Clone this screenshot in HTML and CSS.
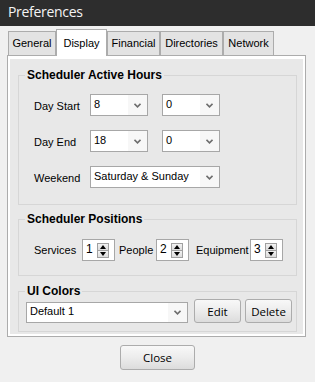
FILE: index.html
```html
<!DOCTYPE html>
<html lang="en">

<head>
  <meta charset="UTF-8">
  <meta name="viewport" content="width=device-width, initial-scale=1.0">
  <link rel="stylesheet" href="styles.css">
</head>

<body>
  <main class="window">
    <header class="titlebar">Preferences</header>

    <nav class="tabs">
      <div class="tab tab--general">General</div>
      <div class="tab tab--display tab--active">Display</div>
      <div class="tab tab--financial">Financial</div>
      <div class="tab tab--directories">Directories</div>
      <div class="tab tab--network">Network</div>
    </nav>

    <section class="panel">
      <div class="panel__inner">
        <fieldset class="group group--hours">
          <legend class="group__title">Scheduler Active Hours</legend>
          <div class="group__body">
            <div class="field-row">
              <span class="label label--hours">Day Start</span>
              <div class="combo combo--short">
                <span class="combo__text">8</span>
                <span class="combo__arrow"><svg width="7" height="5" viewBox="0 0 7 5"><polyline points="0.5,0.8 3.5,3.8 6.5,0.8" /></svg></span>
              </div>
              <div class="combo combo--short">
                <span class="combo__text">0</span>
                <span class="combo__arrow"><svg width="7" height="5" viewBox="0 0 7 5"><polyline points="0.5,0.8 3.5,3.8 6.5,0.8" /></svg></span>
              </div>
            </div>
            <div class="field-row">
              <span class="label label--hours">Day End</span>
              <div class="combo combo--short">
                <span class="combo__text">18</span>
                <span class="combo__arrow"><svg width="7" height="5" viewBox="0 0 7 5"><polyline points="0.5,0.8 3.5,3.8 6.5,0.8" /></svg></span>
              </div>
              <div class="combo combo--short">
                <span class="combo__text">0</span>
                <span class="combo__arrow"><svg width="7" height="5" viewBox="0 0 7 5"><polyline points="0.5,0.8 3.5,3.8 6.5,0.8" /></svg></span>
              </div>
            </div>
            <div class="field-row">
              <span class="label label--hours">Weekend</span>
              <div class="combo combo--wide">
                <span class="combo__text">Saturday &amp; Sunday</span>
                <span class="combo__arrow"><svg width="7" height="5" viewBox="0 0 7 5"><polyline points="0.5,0.8 3.5,3.8 6.5,0.8" /></svg></span>
              </div>
            </div>
          </div>
        </fieldset>

        <fieldset class="group group--positions">
          <legend class="group__title">Scheduler Positions</legend>
          <div class="group__body">
            <div class="spin-row">
              <span class="label label--services">Services</span>
              <div class="spin">
                <span class="spin__value">1</span>
                <span class="spin__buttons">
                  <span class="spin__btn spin__btn--up"></span>
                  <span class="spin__btn spin__btn--down"></span>
                </span>
              </div>
              <span class="label label--people">People</span>
              <div class="spin">
                <span class="spin__value">2</span>
                <span class="spin__buttons">
                  <span class="spin__btn spin__btn--up"></span>
                  <span class="spin__btn spin__btn--down"></span>
                </span>
              </div>
              <span class="label label--equipment">Equipment</span>
              <div class="spin">
                <span class="spin__value">3</span>
                <span class="spin__buttons">
                  <span class="spin__btn spin__btn--up"></span>
                  <span class="spin__btn spin__btn--down"></span>
                </span>
              </div>
            </div>
          </div>
        </fieldset>

        <fieldset class="group group--colors">
          <legend class="group__title">UI Colors</legend>
          <div class="group__body">
            <div class="colors-row">
              <div class="combo combo--colors">
                <span class="combo__text">Default 1</span>
                <span class="combo__arrow"><svg width="7" height="5" viewBox="0 0 7 5"><polyline points="0.5,0.8 3.5,3.8 6.5,0.8" /></svg></span>
              </div>
              <button class="btn btn--small">Edit</button>
              <button class="btn btn--small">Delete</button>
            </div>
          </div>
        </fieldset>
      </div>
    </section>

    <footer class="footer">
      <button class="btn btn--close">Close</button>
    </footer>
  </main>
</body>

</html>
```

FILE: styles.css
```css
* {
  box-sizing: border-box;
}

body {
  margin: 0;
  background-color: #f0f0f0;
  font-family: "Liberation Sans", Arial, sans-serif;
  font-size: 11px;
  color: #000;
}

.window {
  width: 315px;
  height: 382px;
}

.titlebar {
  height: 26px;
  padding-left: 8px;
  background-color: #2d2d2d;
  color: #f4f4f4;
  font-family: "Open Sans", sans-serif;
  font-size: 14px;
  line-height: 23px;
  letter-spacing: -0.3px;
}

/* Tab strip */

.tabs {
  display: flex;
  align-items: flex-end;
  padding-top: 3px;
  margin-left: 8px;
}

.tab {
  height: 24px;
  border: 1px solid #acacac;
  border-bottom: none;
  background-color: #e3e3e3;
  text-align: center;
  line-height: 23px;
}

.tab--active {
  position: relative;
  z-index: 1;
  height: 27px;
  margin-bottom: -1px;
  background-color: #fff;
  line-height: 26px;
}

.tab--general { width: 48px; }
.tab--display { width: 51px; }
.tab--financial { width: 53px; }
.tab--directories { width: 63px; }
.tab--network { width: 51px; }

/* Panel */

.panel {
  margin: 0 9px 0 7px;
  padding: 3px 2px 2px;
  border: 1px solid #acacac;
  background-color: #fff;
}

.panel__inner {
  padding: 8px 6px 2px 8px;
  background-color: #e8e8e8;
}

.group {
  margin: 0;
  padding: 0;
  min-width: 0;
  border: 1px solid #d6d6d6;
}

.group + .group {
  margin-top: 6px;
}

.group--colors {
  margin-top: 7px !important;
}

.group__title {
  margin-left: 6px;
  padding: 0 2px;
  font-size: 12px;
  font-weight: 700;
  line-height: 16px;
}

.group--hours .group__body {
  padding: 11px 0 16px 15px;
}

.group--positions .group__body {
  padding: 12px 0 14px 15px;
}

.group--colors .group__body {
  padding: 0 0 8px 7px;
}

.field-row {
  display: flex;
  align-items: flex-start;
}

.field-row + .field-row {
  margin-top: 14px;
}

.label--hours {
  width: 56px;
  padding-top: 3px;
  line-height: 19px;
}

/* Combo boxes */

.combo {
  display: flex;
  align-items: center;
  height: 22px;
  border: 1px solid #a7a7a7;
  background-color: #fff;
}

.combo + .combo {
  margin-left: 14px;
}

.combo--short { width: 58px; }
.combo--wide { width: 130px; }

.combo--colors {
  width: 162px;
  height: 21px;
  margin-top: 3px;
}

.combo__text {
  flex: 1;
  align-self: flex-start;
  padding-left: 3px;
  line-height: 18px;
  white-space: nowrap;
}

.combo--colors .combo__text {
  line-height: 17px;
}

.combo__arrow {
  display: flex;
  align-items: center;
  justify-content: center;
  width: 19px;
  height: 100%;
  background-color: #f7f7f7;
}

.combo__arrow polyline {
  fill: none;
  stroke: #6e6e6e;
  stroke-width: 1.6;
}

/* Spinners */

.spin-row {
  display: flex;
  align-items: center;
}

.label--services { width: 48px; }
.label--people { width: 37px; margin-left: 4px; }
.label--equipment { width: 54px; margin-left: 7px; }

.spin {
  display: flex;
  align-items: center;
  width: 33px;
  height: 22px;
  padding: 0 5px 0 3px;
  border: 1px solid #a7a7a7;
  background-color: #fff;
  font-size: 12px;
}

.spin__value {
  flex: 1;
  margin-top: -2px;
}

.spin__buttons {
  display: flex;
  flex-direction: column;
  width: 12px;
  height: 15px;
  border: 1px solid #a0a0a0;
}

.spin__btn {
  display: flex;
  flex: 1;
  align-items: center;
  justify-content: center;
  background: linear-gradient(#f2f2f2, #dcdcdc);
}

.spin__btn--up {
  border-bottom: 1px solid #a0a0a0;
}

.spin__btn::before {
  content: "";
  border-left: 3px solid transparent;
  border-right: 3px solid transparent;
}

.spin__btn--up::before {
  border-bottom: 4px solid #000;
}

.spin__btn--down::before {
  border-top: 4px solid #000;
}

/* Buttons */

.colors-row {
  display: flex;
  align-items: flex-start;
}

.btn {
  height: 24px;
  padding: 0;
  border: 1px solid #acacac;
  border-radius: 3px;
  background: linear-gradient(#f8f8f8, #ececec 50%, #dcdcdc);
  color: #000;
  font-family: "Open Sans", sans-serif;
  font-size: 11.5px;
}

.btn--small {
  width: 47px;
}

.combo + .btn--small {
  margin-left: 6px;
}

.btn--small + .btn--small {
  margin-left: 4px;
}

.footer {
  display: flex;
  justify-content: center;
  margin-top: 8px;
}

.btn--close {
  width: 75px;
  height: 25px;
}
```
